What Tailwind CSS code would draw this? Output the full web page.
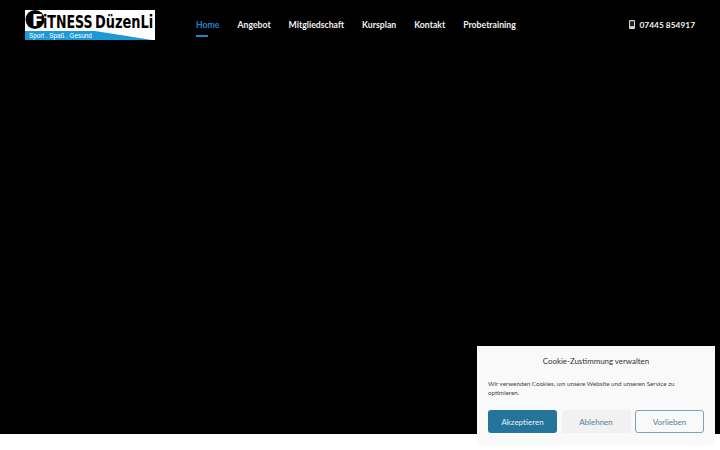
<!DOCTYPE html>
<html lang="de">
<head>
  <meta charset="UTF-8" />
  <meta name="viewport" content="width=device-width, initial-scale=1.0"/>
  <title>Fitness Düzenli</title>
  <script src="https://cdn.jsdelivr.net/npm/@tailwindcss/browser@4"></script>
</head>
<body class="bg-white h-[450px] w-[720px] overflow-hidden relative font-['Lato',sans-serif]">

  <!-- Hero -->
  <div class="bg-black h-[434px]">
    <!-- Header -->
    <header class="flex items-center h-[50px] px-[25px]">
      <!-- Logo -->
      <div class="relative w-[130px] h-[30px] bg-white overflow-hidden shrink-0">
        <svg class="absolute inset-0" width="130" height="30" viewBox="0 0 130 30">
          <polygon points="0,21 70,21 127,30 0,30" fill="#1b9ad6"/>
          <circle cx="10" cy="9.5" r="9.5" fill="#000"/>
        </svg>
        <span class="absolute left-[7px] top-[1px] text-[16px] leading-[20px] font-bold text-white font-['DejaVu_Sans',sans-serif]">F</span>
        <span class="absolute left-[18px] top-[1px] text-[18px] leading-[22px] font-bold text-black font-['DejaVu_Sans',sans-serif] whitespace-nowrap scale-x-[0.7] origin-left">iTNESS</span>
        <span class="absolute left-[70px] top-[1px] text-[18px] leading-[22px] font-bold text-black font-['DejaVu_Sans',sans-serif] whitespace-nowrap scale-x-[0.72] origin-left">DüzenLi</span>
        <span class="absolute left-[4px] top-[21px] text-[6.3px] leading-[9px] text-white font-['Liberation_Sans',sans-serif] whitespace-nowrap">Sport . Spaß . Gesund</span>
      </div>

      <!-- Nav -->
      <nav class="flex gap-[18px] ml-[41px] text-[8.7px] font-bold text-[#f2f2f2] whitespace-nowrap">
        <a href="#" class="relative text-[#1e88c7]">Home<span class="absolute left-0 -bottom-[5px] w-[12px] h-[2px] bg-[#1e88c7]"></span></a>
        <a href="#">Angebot</a>
        <a href="#">Mitgliedschaft</a>
        <a href="#">Kursplan</a>
        <a href="#">Kontakt</a>
        <a href="#">Probetraining</a>
      </nav>

      <!-- Phone -->
      <div class="ml-auto flex items-center gap-[5px] text-[8.4px] font-bold text-[#f2f2f2] whitespace-nowrap">
        <svg width="6" height="9" viewBox="0 0 6 9"><rect width="6" height="9" rx="1" fill="#d8d8d8"/><rect x="1" y="1.2" width="4" height="5" fill="#222"/></svg>
        <span>07445 854917</span>
      </div>
    </header>
  </div>

  <!-- Cookie banner -->
  <div class="absolute left-[477px] top-[346px] w-[238px] h-[99px] bg-[#f9f9f9] px-[11px] pt-[10px] text-[#333]">
    <p class="text-center text-[7.9px] leading-[11px]">Cookie-Zustimmung verwalten</p>
    <p class="mt-[12px] text-[6.25px] leading-[9px] text-[#444]">Wir verwenden Cookies, um unsere Website und unseren Service zu optimieren.</p>
    <div class="mt-[13px] flex justify-between text-[8px]">
      <button class="w-[69px] h-[23px] rounded-[3px] bg-[#24749c] text-[#e8f0f4]">Akzeptieren</button>
      <button class="w-[69px] h-[23px] rounded-[3px] bg-[#f1f1f1] text-[#55809a]">Ablehnen</button>
      <button class="w-[69px] h-[23px] rounded-[3px] border border-[#7ea3b5] text-[#55809a]">Vorlieben</button>
    </div>
  </div>

</body>
</html>
